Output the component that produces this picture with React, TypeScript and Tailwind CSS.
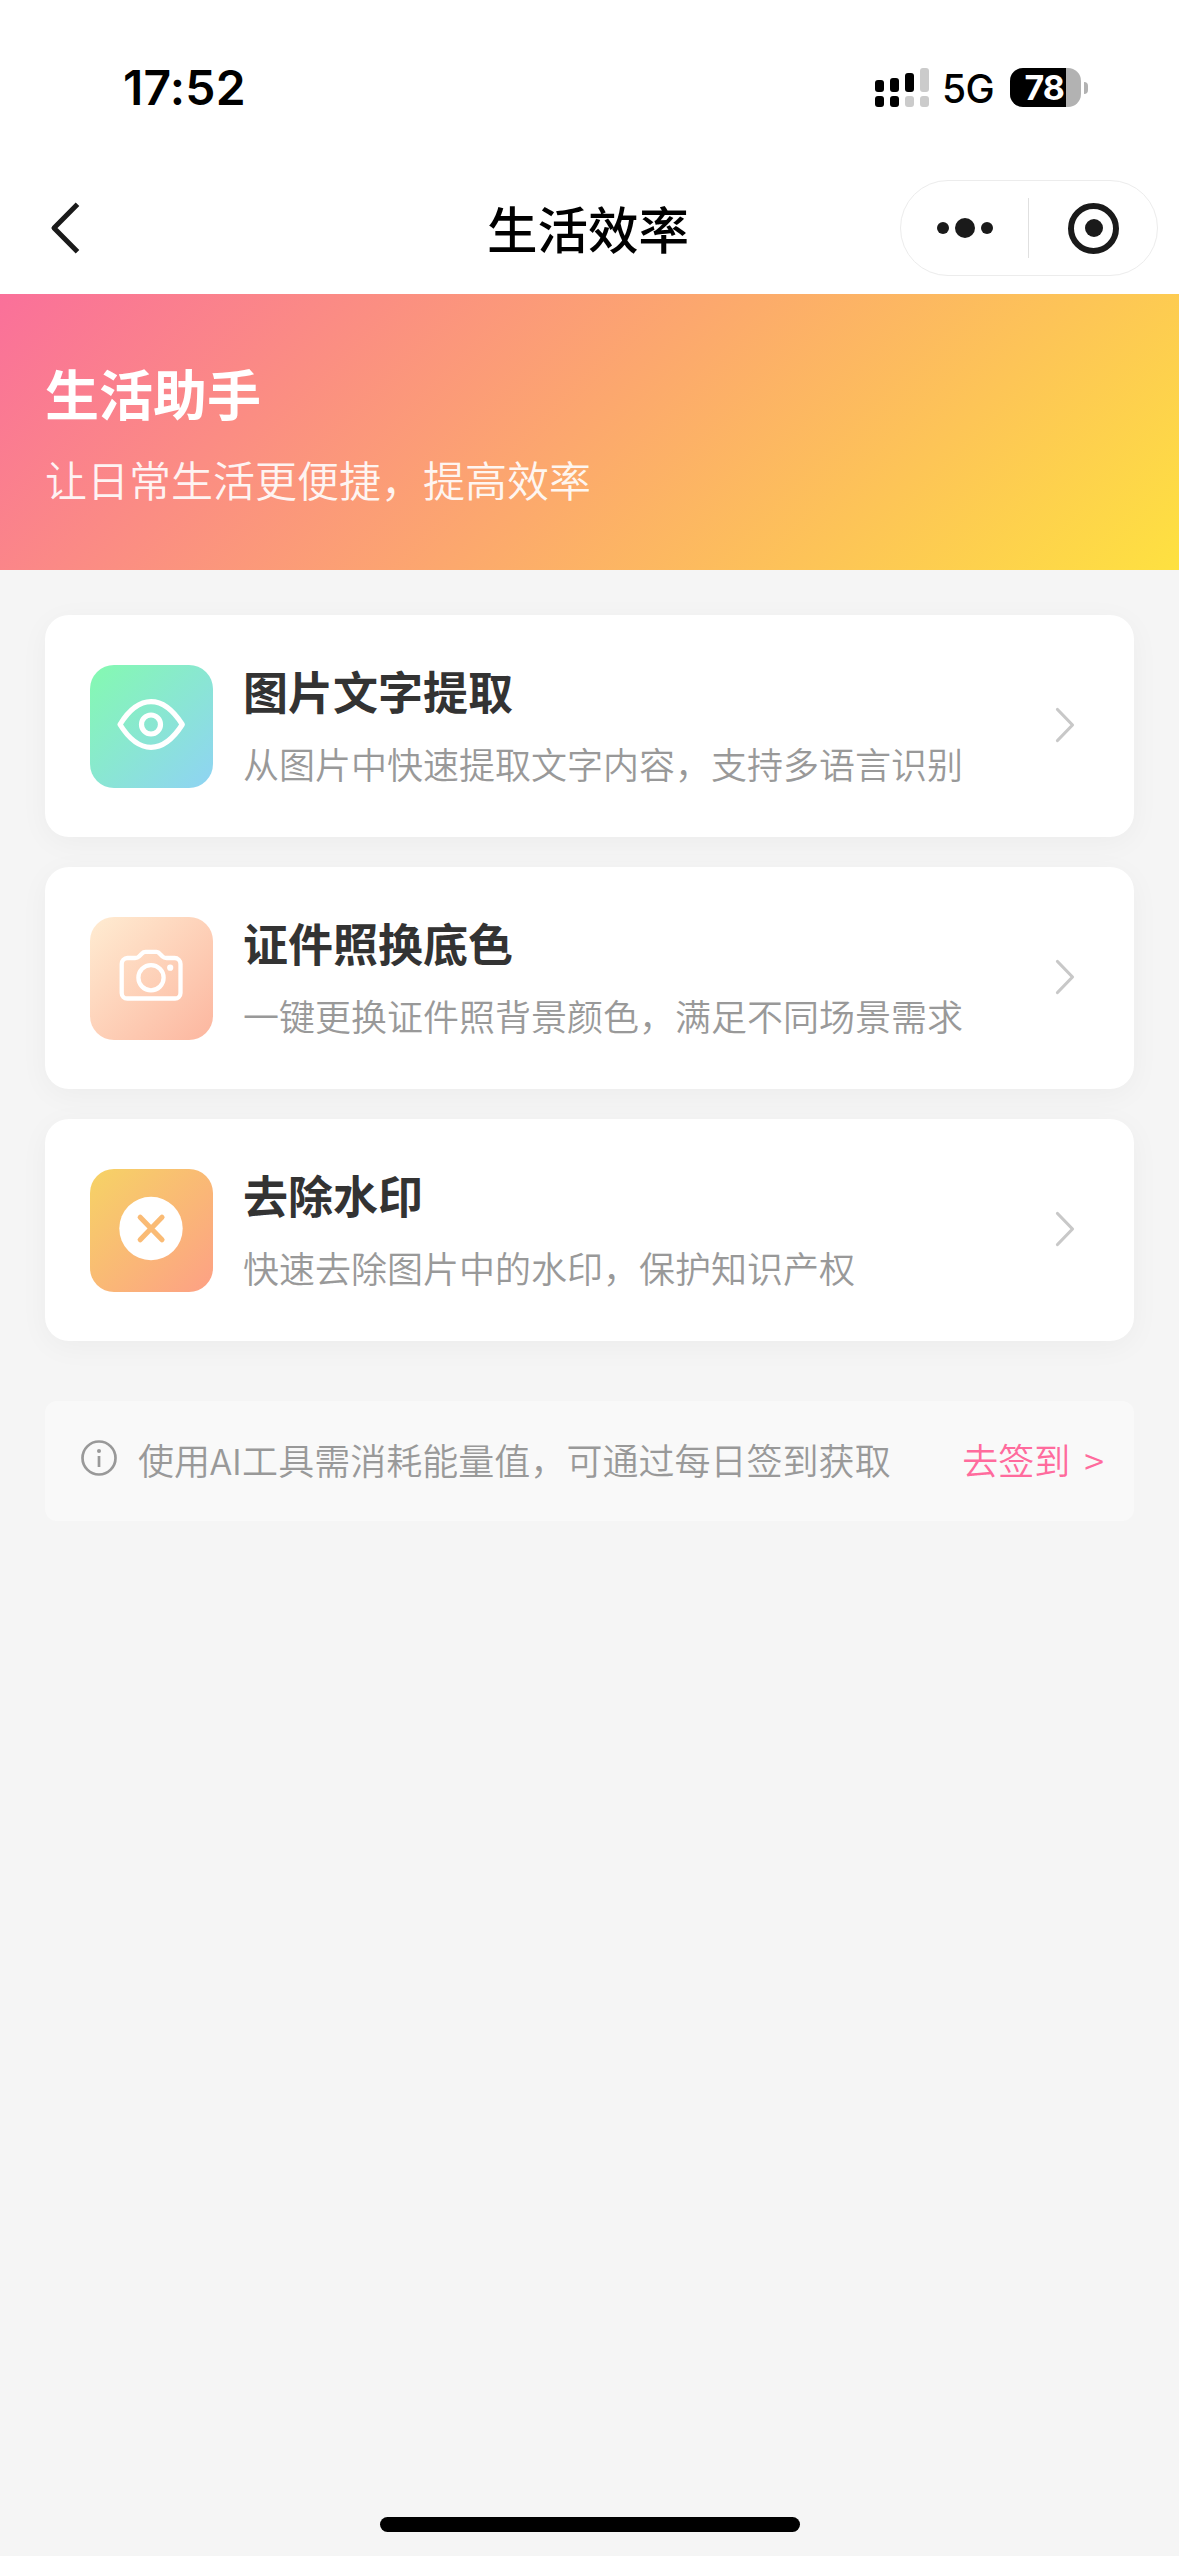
import type { ReactNode } from "react";

const signalBars = [
  { top: "h-[12px] bg-black", bottom: "bg-black" },
  { top: "h-[14px] bg-black", bottom: "bg-black" },
  { top: "h-[19px] bg-black", bottom: "bg-[#cbcbcb]" },
  { top: "h-[24px] bg-[#cbcbcb]", bottom: "bg-[#cbcbcb]" },
];

function StatusBar() {
  return (
    <div className="flex h-[162px] items-start justify-between pl-[123px] pr-[91px] pt-[68px] font-['Inter','Noto_Sans_CJK_SC',sans-serif]">
      <div className="mt-[-1px] text-[48px] font-semibold leading-[42px] tracking-[0.2px] text-black">17:52</div>
      <div className="flex h-[39px] items-center">
        <div className="flex h-[39px] items-end gap-[6px]">
          {signalBars.map((bar, i) => (
            <div key={i} className="flex w-[9px] flex-col gap-[4px]">
              <div className={"rounded-[3px] " + bar.top} />
              <div className={"h-[11px] rounded-[3px] " + bar.bottom} />
            </div>
          ))}
        </div>
        <div className="ml-[13px] w-[54px] pt-[2px] text-[39px] font-medium leading-[39px] tracking-[-0.5px] text-black">5G</div>
        <div className="ml-[14px] flex h-[39px] w-[71px] items-center overflow-hidden rounded-[13px] bg-[#b2b2b2]">
          <div className="flex h-full w-[56px] items-center justify-end bg-black pr-[2px] text-[34px] font-bold leading-[39px] tracking-[-1px] text-white">
            78
          </div>
        </div>
        <div className="ml-[3px] h-[12px] w-[4px] rounded-r-full bg-[#b2b2b2]" />
      </div>
    </div>
  );
}

function NavBar() {
  return (
    <div className="grid h-[132px] grid-cols-[1fr_auto_1fr] items-center">
      <svg className="ml-[45px] h-[60px] w-[40px]" viewBox="0 0 40 60" fill="none" stroke="#1a1a1a" strokeWidth="5">
        <path d="M32.5 6.2 9 30l23.5 23.8" strokeLinejoin="round" />
      </svg>
      <h1 className="mb-[3px] mr-[3px] text-[50.5px] font-medium leading-[60px] text-black">生活效率</h1>
      <div className="mr-[21px] flex h-[96px] w-[258px] items-center justify-self-end rounded-full border border-[#ececec]">
        <div className="flex flex-1 items-center justify-center gap-[6px]">
          <span className="size-[12px] rounded-full bg-[#1a1a1a]" />
          <span className="size-[20px] rounded-full bg-[#1a1a1a]" />
          <span className="size-[12px] rounded-full bg-[#1a1a1a]" />
        </div>
        <div className="h-[60px] w-px bg-[#e0e0e0]" />
        <div className="flex flex-1 items-center justify-center pl-px">
          <div className="flex size-[51px] items-center justify-center rounded-full border-[6px] border-[#1a1a1a]">
            <span className="size-[18px] rounded-full bg-[#1a1a1a]" />
          </div>
        </div>
      </div>
    </div>
  );
}

const eyeIcon = (
  <svg className="size-full" viewBox="0 0 123 123" fill="none" stroke="white" strokeWidth="5.2" strokeLinejoin="round">
    <path d="M30 59.5C39 45 49 36.7 61 36.7S83 45 92.3 59.5C83 74 73 82.3 61 82.3S39 74 30 59.5Z" />
    <circle cx="61" cy="59.5" r="9.5" />
  </svg>
);

const cameraIcon = (
  <svg className="size-full" viewBox="0 0 123 123" fill="none" stroke="white" strokeWidth="4.3" strokeLinejoin="round">
    <path d="M37.5 41H45q2.500 0 4-1.500l3-3Q53.500 34.900 55.500 34.900H66.500q2 0 3 1.600l3 3Q74 41 76.500 41H84.500a6 6 0 0 1 6 6V76a5.500 5.500 0 0 1-5.500 5.500H37.200a5.500 5.500 0 0 1-5.500-5.500V47a6 6 0 0 1 5.800-6Z" />
    <circle cx="61" cy="60.700" r="12.600" />
    <circle cx="80.200" cy="50.700" r="3.100" fill="white" stroke="none" />
  </svg>
);

const removeIcon = (
  <svg className="size-full" viewBox="0 0 123 123" fill="none">
    <circle cx="61" cy="59.500" r="31.700" fill="white" />
    <path d="m50.200 48.300 21.800 22.400m0-22.400L50.200 70.700" stroke="#fabb75" strokeWidth="5.200" strokeLinecap="round" />
  </svg>
);

const tools: { title: string; desc: string; tile: string; icon: ReactNode }[] = [
  {
    title: "图片文字提取",
    desc: "从图片中快速提取文字内容，支持多语言识别",
    tile: "bg-[linear-gradient(135deg,#84fab0,#8fd3f4)]",
    icon: eyeIcon,
  },
  {
    title: "证件照换底色",
    desc: "一键更换证件照背景颜色，满足不同场景需求",
    tile: "bg-[linear-gradient(135deg,#ffecd2,#fcb69f)]",
    icon: cameraIcon,
  },
  {
    title: "去除水印",
    desc: "快速去除图片中的水印，保护知识产权",
    tile: "bg-[linear-gradient(135deg,#f6d365,#fda085)]",
    icon: removeIcon,
  },
];

export default function App() {
  return (
    <div className="flex h-[2556px] w-[1179px] flex-col overflow-hidden bg-[#f5f5f5] font-['Noto_Sans_CJK_SC',sans-serif]">
      <header className="bg-white">
        <StatusBar />
        <NavBar />
      </header>

      <section className="h-[276px] bg-[linear-gradient(135deg,#fa709a,#fee140)] px-[45px] pt-[61px] text-white">
        <h2 className="text-[54px] font-bold leading-[76px]">生活助手</h2>
        <p className="mt-[18px] text-[42px] font-[350] leading-[60px] opacity-90">让日常生活更便捷，提高效率</p>
      </section>

      <main className="flex flex-col gap-[30px] px-[45px] pt-[45px]">
        {tools.map((tool) => (
          <div
            key={tool.title}
            className="flex h-[222px] items-center rounded-[24px] bg-white pl-[45px] pr-[53px] shadow-[0_6px_30px_rgba(0,0,0,0.04)]"
          >
            <div className={"size-[123px] shrink-0 rounded-[24px] " + tool.tile}>{tool.icon}</div>
            <div className="mb-[3px] ml-[30px] flex-1 whitespace-nowrap">
              <h3 className="text-[45px] font-bold leading-[62px] text-[#333]">{tool.title}</h3>
              <p className="mt-[15px] text-[36px] font-[350] leading-[52px] text-[#999]">{tool.desc}</p>
            </div>
            <svg className="h-[40px] w-[30px]" viewBox="0 0 30 40" fill="none" stroke="#c8c8c8" strokeWidth="3.2" strokeLinecap="round" strokeLinejoin="round">
              <path d="M6.500 3.500 21.500 19 6.500 34.500" />
            </svg>
          </div>
        ))}

        <div className="mt-[30px] flex h-[120px] items-center rounded-[12px] bg-[#f9f9f9] pb-[5px] pl-[36px] pr-[30px] text-[36px] font-[350] leading-[52px]">
          <svg className="mb-[1px] size-[36px]" viewBox="0 0 36 36" fill="none" stroke="#999" strokeWidth="2.700">
            <circle cx="18" cy="18" r="16.500" />
            <circle cx="18" cy="11" r="2" fill="#999" stroke="none" />
            <path d="M18 16v11" />
          </svg>
          <span className="ml-[21px] flex-1 tracking-[0.03px] text-[#999]">使用AI工具需消耗能量值，可通过每日签到获取</span>
          <span className="text-[#ff6b9d] [word-spacing:6px]">去签到 &gt;</span>
        </div>
      </main>

      <div className="mx-auto mb-[24px] mt-auto h-[15px] w-[420px] rounded-full bg-black" />
    </div>
  );
}
